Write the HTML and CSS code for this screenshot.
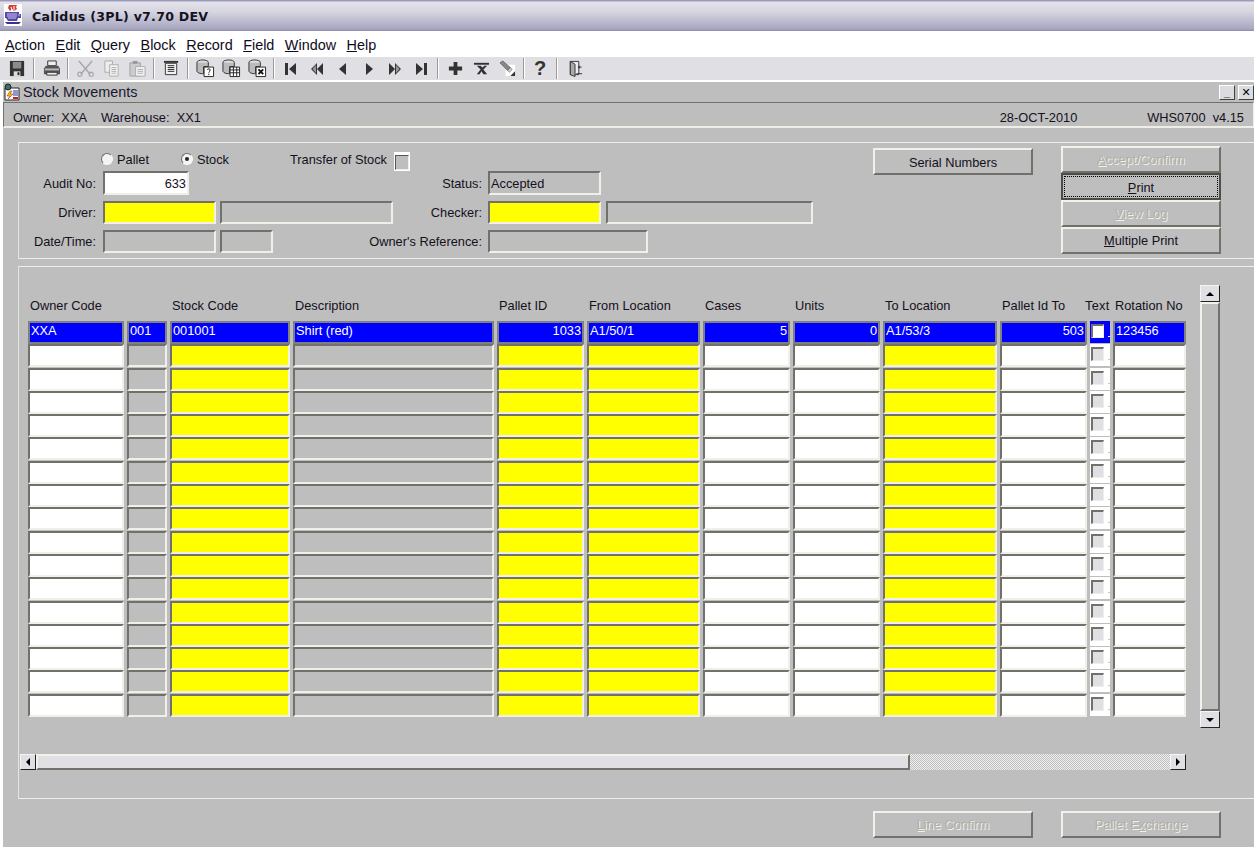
FILE: index.html
```html
<!DOCTYPE html>
<html lang="en">
<head>
<meta charset="utf-8">
<title>Calidus (3PL) v7.70 DEV</title>
<link rel="stylesheet" href="styles.css">
</head>
<body>
<header class="titlebar">
  <svg class="appicon" viewBox="0 0 18 22" width="18" height="22"><rect width="18" height="22" fill="#fff"/><path d="M5 1h8l-1 2 1 2-3 2-2-2-2 2-2-3z" fill="#d04038"/><path d="M7 3l1 3M10 2l0 4" stroke="#fff" fill="none"/><path d="M1 8h14v2h2v4h-3l-1 3H4l-2-3H1z" fill="#5848a8"/><path d="M3 10h10M3 12h10M4 14h8M14 11h2" stroke="#c8c4f0"/><path d="M1 18h16l-2 2H3z" fill="#3c3090"/></svg>
  <span class="apptitle">Calidus (3PL) v7.70 DEV</span>
</header>
<nav class="menubar">
  <span><u>A</u>ction</span><span><u>E</u>dit</span><span><u>Q</u>uery</span><span><u>B</u>lock</span><span><u>R</u>ecord</span><span><u>F</u>ield</span><span><u>W</u>indow</span><span><u>H</u>elp</span>
</nav>
<div class="toolbar">
  <i class="tb"><svg viewBox="0 0 18 18"><path d="M1 1h15v16H1z" fill="#333"/><path d="M4 2h9v7H4z" fill="#8c8c8c"/><path d="M5 12h7v5H5z" fill="#ddd"/><path d="M9 13h2v3H9z" fill="#222"/></svg></i>
  <b class="sep"></b>
  <i class="tb"><svg viewBox="0 0 18 18"><path d="M5 1h9v5H5z" fill="#eee" stroke="#333"/><path d="M3 6h13l2 3v6H1V9z" fill="#555"/><path d="M2 9h15v2H2z" fill="#bbb"/><path d="M4 13h11v3H4z" fill="#eee" stroke="#333"/></svg></i>
  <b class="sep"></b>
  <i class="tb"><svg viewBox="0 0 18 18"><path d="M2 1l12 14M16 1L4 15" stroke="#a8a8a8" stroke-width="1.6" fill="none"/><circle cx="3" cy="15" r="2.2" fill="none" stroke="#a8a8a8" stroke-width="1.2"/><circle cx="15" cy="15" r="2.2" fill="none" stroke="#a8a8a8" stroke-width="1.2"/></svg></i>
  <i class="tb"><svg viewBox="0 0 18 18"><path d="M2 1h8v12H2z" fill="#eee" stroke="#aaa"/><path d="M7 5h9v12H7z" fill="#f4f4f4" stroke="#aaa"/><path d="M9 8h5M9 10h5M9 12h5M9 14h5" stroke="#aaa"/></svg></i>
  <i class="tb"><svg viewBox="0 0 18 18"><path d="M1 3h11v14H1z" fill="#ccc" stroke="#a0a0a0"/><path d="M4 1h5v3H4z" fill="#999"/><path d="M7 7h10v10H7z" fill="#f4f4f4" stroke="#aaa"/><path d="M9 10h6M9 12h6M9 14h6" stroke="#aaa"/></svg></i>
  <b class="sep"></b>
  <i class="tb"><svg viewBox="0 0 18 18"><path d="M1 1h15v2H1z" fill="#333"/><path d="M2.500 3.500h12v12h-12z" fill="#f2f2f2" stroke="#333"/><path d="M5 6h7M5 8h7M5 10h7M5 12h7" stroke="#222"/></svg></i>
  <b class="sep"></b>
  <i class="tb tbl"><svg viewBox="0 0 20 20"><ellipse cx="7" cy="3.500" rx="6" ry="2.500" fill="#ddd" stroke="#333"/><path d="M1 4v9c1 2 4 2.500 6 2.500h1V8h5V4" fill="#bbb" stroke="#333"/><path d="M8.500 8.500h10v10h-10z" fill="#fff" stroke="#222"/><path d="M12 11.500c0-1.500 3-1.500 3 0 0 1.500-1.500 1.500-1.500 3M13.500 15.500v1.500" stroke="#111" fill="none"/></svg></i>
  <i class="tb tbl"><svg viewBox="0 0 20 20"><ellipse cx="7" cy="3.500" rx="6" ry="2.500" fill="#ddd" stroke="#333"/><path d="M1 4v9c1 2 4 2.500 6 2.500h1V8h5V4" fill="#bbb" stroke="#333"/><path d="M8.500 8.500h10v10h-10z" fill="#fff" stroke="#222"/><path d="M8.500 11.500h10M8.500 14.500h10M12 8.500v10M15.500 8.500v10" stroke="#222"/></svg></i>
  <i class="tb tbl"><svg viewBox="0 0 20 20"><ellipse cx="7" cy="3.500" rx="6" ry="2.500" fill="#ddd" stroke="#333"/><path d="M1 4v9c1 2 4 2.500 6 2.500h1V8h5V4" fill="#bbb" stroke="#333"/><path d="M8.500 8.500h10v10h-10z" fill="#fff" stroke="#222"/><path d="M11 11l5 5M16 11l-5 5" stroke="#111" stroke-width="2"/></svg></i>
  <b class="sep"></b>
  <i class="tb nav"><svg viewBox="0 0 14 14"><path d="M1 1h3v12H1zM12 1v12L5 7z" fill="#333"/></svg></i>
  <i class="tb nav"><svg viewBox="0 0 14 14"><path d="M7 1v12L1 7zM13 1v12L7 7z" fill="#333"/><path d="M6 3v8L2.500 7z" fill="#999"/></svg></i>
  <i class="tb nav"><svg viewBox="0 0 14 14"><path d="M10 1v12L3 7z" fill="#333"/></svg></i>
  <i class="tb nav"><svg viewBox="0 0 14 14"><path d="M4 1v12l7-6z" fill="#333"/></svg></i>
  <i class="tb nav"><svg viewBox="0 0 14 14"><path d="M1 1v12l6-6zM7 1v12l6-6z" fill="#333"/><path d="M8 3v8l3.500-4z" fill="#999"/></svg></i>
  <i class="tb nav"><svg viewBox="0 0 14 14"><path d="M2 1v12l7-6zM10 1h3v12h-3z" fill="#333"/></svg></i>
  <b class="sep"></b>
  <i class="tb"><svg viewBox="0 0 18 18"><path d="M7 2h4v5h5v4h-5v5H7v-5H2V7h5z" fill="#333"/></svg></i>
  <i class="tb"><svg viewBox="0 0 18 18"><path d="M1 3h16v2H1z" fill="#333"/><path d="M4 6l4 4-4 5h3l2-3 2 3h4l-4-5 4-4h-3l-2 2-2-2z" fill="#333"/></svg></i>
  <i class="tb"><svg viewBox="0 0 18 18"><path d="M7 5h10v12H7z" fill="#fff"/><path d="M1 3l3-2 8 7-3 3z" fill="#888" stroke="#444" stroke-width=".6"/><path d="M9 11l3-3 2 2-3 3z" fill="#ccc" stroke="#555" stroke-width=".6"/><path d="M17 12v5h-5z" fill="#333"/></svg></i>
  <b class="sep"></b>
  <i class="tb tbq">?</i>
  <b class="sep"></b>
  <i class="tb door"><svg viewBox="0 0 18 18"><path d="M3.500 1.500h9v14h-9z" fill="#eee" stroke="#333"/><path d="M3.500 1.500l5 3v13l-5-2z" fill="#aaa" stroke="#333"/><path d="M10 14.500h6M13 6v3M11.500 7.500h4" stroke="#333"/></svg></i>
</div>
<div class="whitegap"></div>
<main class="window">
  <div class="wintitle">
    <svg class="winicon" viewBox="2 0 18 18" width="18" height="18"><path d="M3 5h14v12H3z" fill="#fff" stroke="#222"/><circle cx="6" cy="4" r="3" fill="#40705c" stroke="#123"/><path d="M8 8l-3 5h3l-2 3 5-5H8l2-3z" fill="#f0d000" stroke="#a01818" stroke-width=".5"/><path d="M11 8h5M11 10h5M11 12h5" stroke="#2030a0"/><path d="M11 14h5v2h-5z" fill="#c02020"/></svg>
    <span class="wintext">Stock Movements</span>
    <span class="winbtns"><i class="wbtn">_</i><i class="wbtn wx">✕</i></span>
  </div>
  <div class="status">
    <span class="s1">Owner:&nbsp; XXA</span><span class="s2">Warehouse:&nbsp; XX1</span>
    <span class="sdate">28-OCT-2010</span><span class="sver">WHS0700&nbsp; v4.15</span>
  </div>
  <section class="panel top">
    <div class="form">
      <div class="optrow">
        <label class="opt o1"><i class="radio"></i>Pallet</label>
        <label class="opt o2"><i class="radio on"></i>Stock</label>
        <label class="opt o3">Transfer of Stock<i class="tick"></i></label>
      </div>
      <div class="fgrid">
        <span class="lab">Audit No:</span><span class="f w num short">633</span><span></span><span></span>
        <span class="lab l2">Status:</span><span class="f g">Accepted</span><span></span><span></span>
        <span class="lab">Driver:</span><span class="f y"></span><span></span><span class="f g"></span>
        <span class="lab l2">Checker:</span><span class="f y"></span><span></span><span class="f g"></span>
        <span class="lab">Date/Time:</span><span class="f g"></span><span></span><span class="f g tiny"></span>
        <span class="lab l2">Owner's Reference:</span><span class="f g wide"></span><span></span><span></span>
      </div>
    </div>
    <button class="btn serial">Serial Numbers</button>
    <div class="btncol">
      <button class="btn off"><u>A</u>ccept/Confirm</button>
      <button class="btn focus"><span><u>P</u>rint</span></button>
      <button class="btn off"><u>V</u>iew Log</button>
      <button class="btn"><u>M</u>ultiple Print</button>
    </div>
  </section>
  <section class="panel lines">
    <div class="tablewrap">
      <div class="table">
        <span class="h">Owner Code</span><span class="h"></span><span class="h">Stock Code</span><span class="h">Description</span><span class="h">Pallet ID</span><span class="h">From Location</span><span class="h">Cases</span><span class="h">Units</span><span class="h">To Location</span><span class="h">Pallet Id To</span><span class="h ht">Text</span><span class="h">Rotation No</span>

        <span class="f b">XXA</span><span class="f b">001</span><span class="f b">001001</span><span class="f b">Shirt (red)</span><span class="f b num">1033</span><span class="f b">A1/50/1</span><span class="f b num">5</span><span class="f b num">0</span><span class="f b">A1/53/3</span><span class="f b num">503</span><span class="c cb"><i class="box"></i></span><span class="f b">123456</span>

        <span class="f w"></span><span class="f g"></span><span class="f y"></span><span class="f g"></span><span class="f y"></span><span class="f y"></span><span class="f w"></span><span class="f w"></span><span class="f y"></span><span class="f w"></span><span class="c"><i class="box"></i></span><span class="f w"></span>
        <span class="f w"></span><span class="f g"></span><span class="f y"></span><span class="f g"></span><span class="f y"></span><span class="f y"></span><span class="f w"></span><span class="f w"></span><span class="f y"></span><span class="f w"></span><span class="c"><i class="box"></i></span><span class="f w"></span>
        <span class="f w"></span><span class="f g"></span><span class="f y"></span><span class="f g"></span><span class="f y"></span><span class="f y"></span><span class="f w"></span><span class="f w"></span><span class="f y"></span><span class="f w"></span><span class="c"><i class="box"></i></span><span class="f w"></span>
        <span class="f w"></span><span class="f g"></span><span class="f y"></span><span class="f g"></span><span class="f y"></span><span class="f y"></span><span class="f w"></span><span class="f w"></span><span class="f y"></span><span class="f w"></span><span class="c"><i class="box"></i></span><span class="f w"></span>
        <span class="f w"></span><span class="f g"></span><span class="f y"></span><span class="f g"></span><span class="f y"></span><span class="f y"></span><span class="f w"></span><span class="f w"></span><span class="f y"></span><span class="f w"></span><span class="c"><i class="box"></i></span><span class="f w"></span>
        <span class="f w"></span><span class="f g"></span><span class="f y"></span><span class="f g"></span><span class="f y"></span><span class="f y"></span><span class="f w"></span><span class="f w"></span><span class="f y"></span><span class="f w"></span><span class="c"><i class="box"></i></span><span class="f w"></span>
        <span class="f w"></span><span class="f g"></span><span class="f y"></span><span class="f g"></span><span class="f y"></span><span class="f y"></span><span class="f w"></span><span class="f w"></span><span class="f y"></span><span class="f w"></span><span class="c"><i class="box"></i></span><span class="f w"></span>
        <span class="f w"></span><span class="f g"></span><span class="f y"></span><span class="f g"></span><span class="f y"></span><span class="f y"></span><span class="f w"></span><span class="f w"></span><span class="f y"></span><span class="f w"></span><span class="c"><i class="box"></i></span><span class="f w"></span>
        <span class="f w"></span><span class="f g"></span><span class="f y"></span><span class="f g"></span><span class="f y"></span><span class="f y"></span><span class="f w"></span><span class="f w"></span><span class="f y"></span><span class="f w"></span><span class="c"><i class="box"></i></span><span class="f w"></span>
        <span class="f w"></span><span class="f g"></span><span class="f y"></span><span class="f g"></span><span class="f y"></span><span class="f y"></span><span class="f w"></span><span class="f w"></span><span class="f y"></span><span class="f w"></span><span class="c"><i class="box"></i></span><span class="f w"></span>
        <span class="f w"></span><span class="f g"></span><span class="f y"></span><span class="f g"></span><span class="f y"></span><span class="f y"></span><span class="f w"></span><span class="f w"></span><span class="f y"></span><span class="f w"></span><span class="c"><i class="box"></i></span><span class="f w"></span>
        <span class="f w"></span><span class="f g"></span><span class="f y"></span><span class="f g"></span><span class="f y"></span><span class="f y"></span><span class="f w"></span><span class="f w"></span><span class="f y"></span><span class="f w"></span><span class="c"><i class="box"></i></span><span class="f w"></span>
        <span class="f w"></span><span class="f g"></span><span class="f y"></span><span class="f g"></span><span class="f y"></span><span class="f y"></span><span class="f w"></span><span class="f w"></span><span class="f y"></span><span class="f w"></span><span class="c"><i class="box"></i></span><span class="f w"></span>
        <span class="f w"></span><span class="f g"></span><span class="f y"></span><span class="f g"></span><span class="f y"></span><span class="f y"></span><span class="f w"></span><span class="f w"></span><span class="f y"></span><span class="f w"></span><span class="c"><i class="box"></i></span><span class="f w"></span>
        <span class="f w"></span><span class="f g"></span><span class="f y"></span><span class="f g"></span><span class="f y"></span><span class="f y"></span><span class="f w"></span><span class="f w"></span><span class="f y"></span><span class="f w"></span><span class="c"><i class="box"></i></span><span class="f w"></span>
        <span class="f w"></span><span class="f g"></span><span class="f y"></span><span class="f g"></span><span class="f y"></span><span class="f y"></span><span class="f w"></span><span class="f w"></span><span class="f y"></span><span class="f w"></span><span class="c"><i class="box"></i></span><span class="f w"></span>
      </div>
      <div class="vscroll">
        <i class="sbtn"><svg viewBox="0 0 8 4" width="8" height="4"><path d="M0 4h8L4 0z" fill="#000"/></svg></i>
        <i class="vthumb"></i>
        <i class="sbtn"><svg viewBox="0 0 8 4" width="8" height="4"><path d="M0 0h8L4 4z" fill="#000"/></svg></i>
      </div>
    </div>
    <div class="hscroll">
      <i class="sbtn"><svg viewBox="0 0 4 8" width="4" height="8"><path d="M4 0v8L0 4z" fill="#000"/></svg></i>
      <i class="hthumb"></i>
      <i class="dither"></i>
      <i class="sbtn"><svg viewBox="0 0 4 8" width="4" height="8"><path d="M0 0v8l4-4z" fill="#000"/></svg></i>
    </div>
  </section>
  <footer class="bottom">
    <button class="btn off"><u>L</u>ine Confirm</button>
    <button class="btn off">Pallet E<u>x</u>change</button>
  </footer>
</main>
</body>
</html>
```
FILE: styles.css
```css
* { box-sizing: border-box; }
html, body { margin: 0; padding: 0; }
body {
  width: 1254px;
  height: 847px;
  overflow: hidden;
  background: #fff;
  font-family: "Liberation Sans", Arial, sans-serif;
  font-size: 12.8px;
  color: #14101c;
  display: flex;
  flex-direction: column;
}
i, b { font-style: normal; font-weight: normal; }

.titlebar {
  height: 31px;
  flex: none;
  display: flex;
  align-items: center;
  padding-left: 4px;
  background: linear-gradient(#9c9abc 0, #9c9abc 1px, #e4e3ea 2px, #d5d4e0 12px, #a7a6c0 29px, #8e8da8 31px);
}
.appicon { margin-top: -2px; }
.apptitle {
  margin-left: 10px;
  padding-top: 2px;
  font-family: "DejaVu Sans", sans-serif;
  font-weight: bold;
  font-size: 12.6px;
  color: #15121f;
  letter-spacing: .25px;
}
.menubar {
  height: 26px;
  flex: none;
  display: flex;
  gap: 10.5px;
  align-items: center;
  padding: 1px 0 0 5px;
  font-size: 14.4px;
  color: #100c20;
}
.toolbar {
  height: 23px;
  flex: none;
  display: flex;
  align-items: center;
  padding-left: 4px;
  background: #e0dfe3;
}
.tb {
  width: 26px;
  height: 21px;
  flex: none;
  display: flex;
  align-items: center;
  justify-content: center;
}
.tb svg { width: 17px; height: 17px; }
.tbl svg { width: 19px; height: 19px; }
.nav svg { width: 14px; height: 14px; }
.tbq {
  font-family: "Liberation Sans", sans-serif;
  font-weight: bold;
  font-size: 20px;
  color: #333;
  margin-left: -1px;
}
.door { margin-left: 1px; }
.sep {
  width: 2px;
  height: 21px;
  margin: 0 3px;
  flex: none;
  border-left: 1px solid #9b9a96;
  border-right: 1px solid #fff;
}
.whitegap { height: 2px; flex: none; }

.window {
  flex: 1;
  margin-left: 3px;
  background: #bebebe;
  display: flex;
  flex-direction: column;
  min-height: 0;
}
.wintitle {
  height: 20px;
  flex: none;
  display: flex;
  align-items: center;
  padding-left: 1px;
  font-size: 14.4px;
  color: #1a1630;
}
.winicon { flex: none; }
.wintext { margin-left: 1px; }
.winbtns { margin-left: auto; display: flex; gap: 3px; }
.wbtn {
  width: 16px;
  height: 15px;
  display: flex;
  align-items: center;
  justify-content: center;
  background: #dcdbdf;
  border: 1px solid;
  border-color: #fff #404040 #404040 #fff;
  font-size: 11px;
  font-weight: bold;
  color: #000;
  line-height: 1;
}
.wx { font-family: "DejaVu Sans", sans-serif; }
.status {
  height: 26px;
  flex: none;
  display: flex;
  align-items: center;
  padding: 5px 9px 0 9px;
  border-top: 1px solid #72706a;
  border-left: 1px solid #72706a;
  border-bottom: 2px solid #eeede6;
  border-right: 1px solid #eeede6;
}
.s1 { width: 88px; }
.sdate { margin-left: auto; }
.sver { margin-left: 70px; }

.panel {
  margin-left: 15px;
  border: solid #eeeeea;
  border-width: 1px 0 1px 1px;
  border-left-color: #e4e4e0;
}
.top {
  height: 117px;
  margin-top: 14px;
  display: flex;
  align-items: flex-start;
}
.form { width: 794px; flex: none; padding-top: 7px; }
.optrow {
  height: 18px;
  display: flex;
  align-items: center;
}
.opt { display: flex; align-items: center; }
.o1 { margin-left: 82px; width: 80px; }
.o2 { width: 109px; }
.o3 { gap: 7px; }
.radio {
  width: 12px;
  height: 12px;
  margin-right: 4px;
  border-radius: 50%;
  background: #f4f4f4;
  border: 1px solid;
  border-color: #6c6c6c #f8f8f8 #f8f8f8 #6c6c6c;
  display: flex;
  align-items: center;
  justify-content: center;
}
.radio.on::after {
  content: "";
  width: 4px;
  height: 4px;
  border-radius: 50%;
  background: #222;
}
.tick {
  width: 16px;
  height: 19px;
  background: #fff;
  padding: 3px 3px 3px 1px;
  display: block;
  margin-top: 5px;
}
.tick::before {
  content: "";
  display: block;
  width: 12px;
  height: 13px;
  background: #bebebe;
  border: 1px solid;
  border-color: #555 #eee #eee #555;
}
.fgrid {
  display: grid;
  grid-template-columns: 84px 113px 4px 173px 95px 113px 5px 207px;
  grid-template-rows: 24px 23.5px 23.5px;
  row-gap: 5.500px;
  align-items: stretch;
  margin-top: 3px;
}
.lab { align-self: center; justify-self: end; padding-right: 7px; white-space: nowrap; }
.l2 { padding-right: 6px; }
.f {
  display: block;
  padding: 2px 1px 0;
  white-space: nowrap;
  overflow: hidden;
  line-height: 18px;
  border: 2px solid;
  border-color: #72706a #f0efe8 #f0efe8 #72706a;
}
.w { background: #fff; }
.g { background: #bebebe; }
.y { background: #ffff00; }
.b { background: #0000ff; color: #fff; border-color: #808080; }
.num { text-align: right; padding-right: 1px; }
.short { width: 86px; }
.tiny { width: 53px; }
.wide { width: 160px; }

.btn {
  font: inherit;
  color: inherit;
  background: #bebebe;
  padding: 0;
  height: 27px;
  width: 160px;
  flex: none;
  border: 2px solid;
  border-color: #f2f1ea #72706a #72706a #f2f1ea;
  display: flex;
  align-items: center;
  justify-content: center;
}
.off { color: #b0afa8; text-shadow: 1px 1px 0 #f2f1ea; }
.serial { margin: 5px 0 0 60px; padding-top: 2px; }
.btncol { margin: 3px 0 0 28px; display: flex; flex-direction: column; }
.focus {
  border-color: #4e4c46;
  padding: 1px;
}
.focus span {
  display: flex;
  width: 100%;
  height: 100%;
  padding-top: 2px;
  align-items: center;
  justify-content: center;
  border: 1px dotted #000;
}

.lines {
  height: 533px;
  margin-top: 7px;
  padding-top: 18px;
}
.tablewrap { display: flex; padding-left: 9px; }
.table {
  display: grid;
  grid-template-columns: 96px 40px 120px 201px 87px 113px 87px 87px 114px 87px 20px 73px;
  grid-template-rows: 36px;
  grid-auto-rows: 22.3px;
  gap: 1px 3px;
  margin-top: -1px;
  width: 1158px;
  flex: none;
  align-self: flex-start;
}
.h { padding: 13px 0 0 2px; white-space: nowrap; line-height: 17px; }
.ht { margin-left: -7px; letter-spacing: .3px; }
.table .f { height: 23px; line-height: 16px; padding-top: 0; }
.c {
  height: 22px;
  background: linear-gradient(#d8c8a0, #d8c8a0) no-repeat 18px 15px / 2px 1px, #fff;
  padding: 3px 0 0 1px;
  display: block;
}
.cb { background: linear-gradient(#f0f0f0, #f0f0f0) no-repeat 18px 15px / 2px 1px, #0000ff; }
.box {
  display: block;
  width: 13px;
  height: 14px;
  background: #e0dfe3;
  border: 1px solid;
  border-color: #72706a #eee #eee #72706a;
  border-width: 2px 1px 1px 2px;
}
.cb .box { background: #fff; }

.vscroll {
  width: 20px;
  height: 443px;
  margin-left: 14px;
  display: flex;
  flex-direction: column;
}
.sbtn {
  flex: none;
  width: 20px;
  height: 17px;
  background: #e0dfe3;
  border: 1px solid;
  border-color: #f4f4f0 #222 #222 #f4f4f0;
  display: flex;
  align-items: center;
  justify-content: center;
}
.vthumb {
  flex: 1;
  background: #bebebe;
  border: 2px solid;
  border-color: #f2f1ea #72706a #72706a #f2f1ea;
}
.hscroll {
  display: flex;
  height: 16px;
  margin-top: 26px;
  margin-left: 1px;
  width: 1166px;
}
.hscroll .sbtn { width: 16px; height: 16px; }
.hthumb {
  width: 874px;
  background: #e0dfe3;
  border: 2px solid;
  border-color: #f2f1ea #72706a #72706a #f2f1ea;
}
.dither {
  flex: 1;
  background: repeating-conic-gradient(#f0f0f0 0 25%, #bebebe 0 50%) 0 0 / 2px 2px;
}
.bottom {
  display: flex;
  gap: 28px;
  padding: 12px 0 0 870px;
}
```
